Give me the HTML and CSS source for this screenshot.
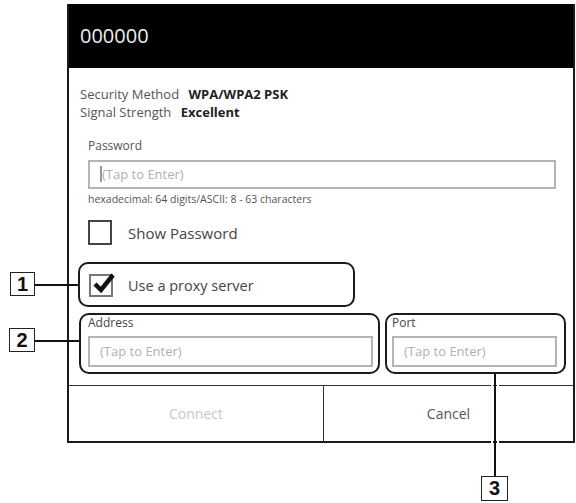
FILE: index.html
```
<!DOCTYPE html>
<html lang="en">
<head>
    <meta charset="UTF-8">
    <meta name="viewport" content="width=device-width, initial-scale=1.0">
    <title>Wi-Fi</title>
    <link rel="stylesheet" href="styles.css">
</head>
<body>
    <div class="page">
        <div class="dialog">
            <div class="dialog-head">000000</div>
            <div class="dialog-body">
                <div class="info">
                    <div>Security Method <b>WPA/WPA2 PSK</b></div>
                    <div>Signal Strength <b>Excellent</b></div>
                </div>
                <div class="field">
                    <div class="label">Password</div>
                    <div class="input"><span class="caret"></span>(Tap to Enter)</div>
                    <div class="hint">hexadecimal: 64 digits/ASCII: 8 - 63 characters</div>
                </div>
                <div class="check-row">
                    <span class="box"></span>
                    <span>Show Password</span>
                </div>
                <div class="proxy">
                    <span class="box checked">
                        <svg width="24" height="22" viewBox="0 0 24 22"><path d="M4 11 L10 17 L22 2" fill="none" stroke="#111" stroke-width="4.5"/></svg>
                    </span>
                    <span>Use a proxy server</span>
                </div>
                <div class="proxy-fields">
                    <div class="group address">
                        <div class="label">Address</div>
                        <div class="input">(Tap to Enter)</div>
                    </div>
                    <div class="group port">
                        <div class="label">Port</div>
                        <div class="input">(Tap to Enter)</div>
                    </div>
                </div>
            </div>
            <div class="dialog-foot">
                <div class="btn connect">Connect</div>
                <div class="btn cancel">Cancel</div>
            </div>
        </div>

        <!-- callouts -->
        <div class="callout c1">1</div>
        <div class="lead l1"></div>
        <div class="callout c2">2</div>
        <div class="lead l2"></div>
        <div class="lead l3"></div>
        <div class="callout c3">3</div>
    </div>
</body>
</html>
```

FILE: styles.css
```
body {
    margin: 0;
    background: #fff;
    font-family: "Open Sans", "Liberation Sans", sans-serif;
    color: #3a3a3a;
}
.page {
    position: relative;
    width: 576px;
    height: 503px;
    overflow: hidden;
}
.dialog {
    margin: 4px 0 0 67px;
    width: 508px;
    box-sizing: border-box;
    border: 2px solid #1a1a1a;
    border-top: 0;
}
.dialog-head {
    height: 64px;
    background: #000;
    color: #eee;
    font-size: 20px;
    line-height: 64px;
    padding-left: 11px;
}
.dialog-body {
    padding: 17px 0 11px 11px;
}
.info {
    font-size: 13px;
    line-height: 18px;
    color: #555;
}
.info b {
    color: #222;
    margin-left: 6px;
}
.field {
    margin: 17px 0 0 8px;
    width: 468px;
}
.label {
    font-size: 12px;
    line-height: 16px;
    color: #555;
}
.input {
    box-sizing: border-box;
    height: 29px;
    border: 2px solid #b4b4b4;
    font-size: 13px;
    line-height: 25px;
    color: #b0b0b0;
    padding-left: 10px;
    margin-top: 6px;
}
.caret {
    display: inline-block;
    width: 2px;
    height: 16px;
    background: #999;
    vertical-align: -3px;
}
.hint {
    font-size: 10.5px;
    line-height: 14px;
    margin-top: 3px;
    color: #555;
}
.check-row {
    display: flex;
    align-items: center;
    gap: 16px;
    margin: 14px 0 0 8px;
    font-size: 15px;
    color: #444;
}
.box {
    box-sizing: border-box;
    width: 24px;
    height: 25px;
    border: 2px solid #444;
    flex: none;
}
.box.checked {
    height: 23px;
    border-color: #777;
    position: relative;
}
.box.checked svg {
    position: absolute;
    left: 0;
    top: -3px;
}
.proxy {
    box-sizing: border-box;
    display: flex;
    align-items: center;
    gap: 15px;
    margin: 17px 0 0 -2px;
    width: 277px;
    height: 45px;
    padding: 2px 0 0 9px;
    border: 2.5px solid #1a1a1a;
    border-radius: 10px;
    font-size: 14.5px;
    color: #444;
}
.proxy-fields {
    display: flex;
    gap: 5px;
    margin: 6px 0 0 -1px;
}
.group {
    box-sizing: border-box;
    height: 61px;
    border: 2.5px solid #1a1a1a;
    border-radius: 10px;
    padding-top: 1px;
}
.group .label {
    line-height: 14px;
    color: #444;
}
.group .input {
    height: 31px;
    line-height: 27px;
    margin-top: 6px;
    padding-left: 10px;
}
.address {
    width: 301px;
    padding: 1px 5px 0 7px;
}
.port {
    width: 181px;
    padding: 1px 7px 0 5px;
}
.dialog-foot {
    display: flex;
    height: 55px;
    border-top: 1.5px solid #333;
}
.btn {
    font-size: 14px;
    line-height: 55px;
    text-align: center;
}
.connect {
    width: 254px;
    border-right: 1.5px solid #333;
    color: #c8c8c8;
}
.cancel {
    flex: 1;
    color: #555;
}
.callout {
    position: absolute;
    box-sizing: border-box;
    border: 1.5px solid #222;
    background: #fff;
    font-family: "Liberation Sans", Arial, sans-serif;
    font-weight: bold;
    font-size: 20px;
    color: #111;
    text-align: center;
    line-height: 22px;
}
.c1 { left: 10px; top: 272px; width: 25px; height: 24px; }
.c2 { left: 9px; top: 328px; width: 26px; height: 24px; }
.c3 { left: 481px; top: 476px; width: 27px; height: 25px; }
.lead {
    position: absolute;
    background: #111;
}
.l1 { left: 35px; top: 284px; width: 43px; height: 2px; }
.l2 { left: 35px; top: 340px; width: 44px; height: 2px; }
.l3 {
    left: 494px;
    top: 374px;
    width: 2px;
    height: 102px;
    box-shadow: 3px 0 0 #fff, -3px 0 0 #fff;
}
```
